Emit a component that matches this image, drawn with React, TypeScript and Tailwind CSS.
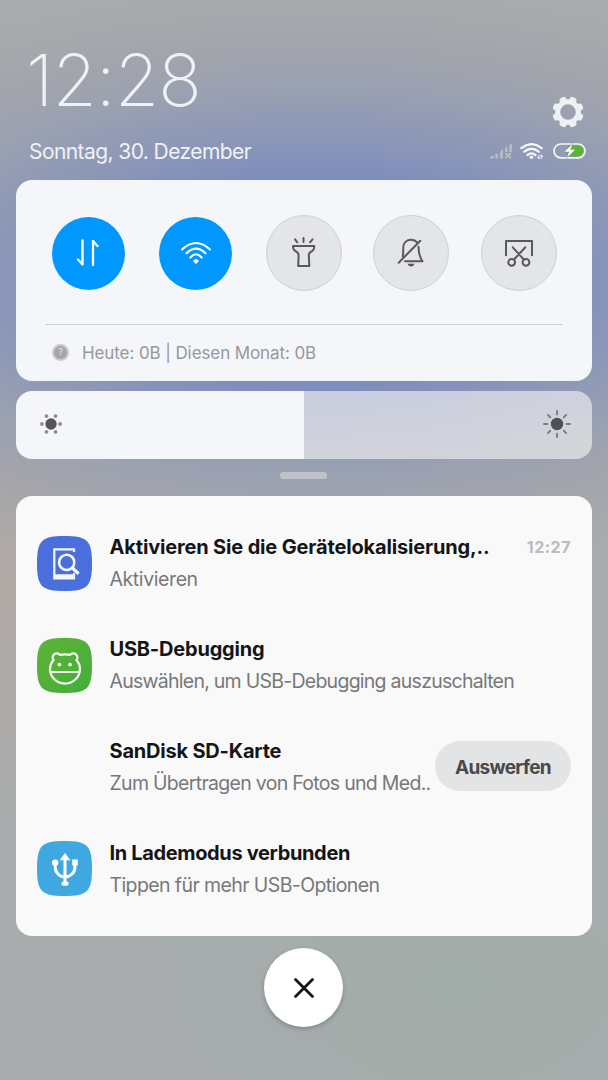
import type { ReactNode } from 'react'

interface NotificationRowProps {
  title: string
  text: string
  titleClass: string
  textClass: string
  icon?: ReactNode
  time?: string
  action?: string
}

function Glyph({ children }: { children: ReactNode }) {
  return (
    <svg
      className="h-8 w-8"
      viewBox="0 0 32 32"
      fill="none"
      stroke="currentColor"
      strokeWidth="2"
      strokeLinecap="round"
      strokeLinejoin="round"
    >
      {children}
    </svg>
  )
}

function Toggle({ active = false, children }: { active?: boolean; children: ReactNode }) {
  return (
    <button
      className={
        active
          ? 'mx-[1.5px] flex h-[73px] w-[73px] items-center justify-center rounded-full bg-[#0098ff] text-white'
          : 'flex h-[76px] w-[76px] items-center justify-center rounded-full border border-[#cfd0d8] bg-[#e4e5e7] text-[#58595d]'
      }
    >
      {children}
    </button>
  )
}

function AppIcon({ from, to, children }: { from: string; to: string; children: ReactNode }) {
  const id = `tile-${from.slice(1)}`
  return (
    <svg className="h-[55px] w-[55px]" viewBox="0 0 55 55" fill="none">
      <defs>
        <linearGradient id={id} x1="0" y1="0" x2="1" y2="1">
          <stop offset="0" stopColor={from} />
          <stop offset="1" stopColor={to} />
        </linearGradient>
      </defs>
      <path
        d="M27.5 0C50.5 0 55 4.5 55 27.5S50.5 55 27.5 55 0 50.5 0 27.5 4.5 0 27.5 0Z"
        fill={`url(#${id})`}
      />
      {children}
    </svg>
  )
}

function GearIcon() {
  const teeth = [22.5, 67.5, 112.5, 157.5, 202.5, 247.5, 292.5, 337.5]
  return (
    <svg className="h-8 w-8" viewBox="-16 -16 32 32" fill="#f0f1f4">
      <circle r="10.3" fill="none" stroke="#f0f1f4" strokeWidth="5" />
      {teeth.map((angle) => (
        <path
          key={angle}
          d="M-4 -11L-3 -14.9Q-2.8 -15.6 -2.1 -15.6H2.1Q2.8 -15.6 3 -14.9L4 -11Z"
          transform={`rotate(${angle})`}
        />
      ))}
    </svg>
  )
}

function StatusIcons() {
  return (
    <div className="flex items-center">
      <svg className="h-4 w-[22px]" viewBox="0 0 22 16" fill="#bcbdc4">
        <path d="M0 15.5V14L4 12.6V15.5ZM5.3 15.5V11.6L7.8 10.2V15.5ZM10.2 15.5V8.2L12.8 6.6V15.5ZM15 9V5L17.4 3.4V9ZM19.3 9V2L21.8 .4V9Z" />
        <path d="M15.5 10L21 15.2M21 10L15.5 15.2" stroke="#bcbdc4" strokeWidth="1.8" />
      </svg>
      <svg
        className="ml-2 h-4 w-6"
        viewBox="0 0 24 16"
        fill="none"
        stroke="#f5f6f8"
        strokeWidth="2.3"
        strokeLinecap="round"
      >
        <path d="M1.3 5.1Q11.5 -2.8 21.7 5.1M4.3 8.7Q11.5 2.8 18.7 8.7M7.5 12Q11.5 8.8 15.5 12" />
        <circle cx="11.5" cy="14.2" r="1.8" fill="#f5f6f8" stroke="none" />
        <path d="M19 12.2V15.6L17.9 14.5M21.3 15.8V12.4L22.4 13.5" strokeWidth="1.1" />
      </svg>
      <svg className="ml-[9px] h-4 w-[33px]" viewBox="0 0 33 16" fill="none">
        <path d="M15 2.6H25A5.3 5.3 0 0 1 25 13.2H13Z" fill="#58b82e" />
        <rect x="1" y="1" width="31" height="13.8" rx="6.9" stroke="#f5f6f8" strokeWidth="1.7" />
        <path
          d="M19.8 .4L11.2 9H16L13.4 15.4L22.4 6.6H17.6Z"
          fill="#fff"
          stroke="#8e9c9f"
          strokeWidth=".5"
        />
      </svg>
    </div>
  )
}

function NotificationRow({
  title,
  text,
  titleClass,
  textClass,
  icon,
  time,
  action,
}: NotificationRowProps) {
  return (
    <article className="flex h-[101.8px] items-start pr-[21px] pl-[21px]">
      <div className="mt-[2.6px] h-[55px] w-[55px] shrink-0">{icon}</div>
      <div className="ml-[17.5px] min-w-0 flex-1 whitespace-nowrap">
        <h2 className={`text-xl leading-7 font-bold text-[#151517] ${titleClass}`}>{title}</h2>
        <p className={`mt-[3.8px] text-[19.5px] leading-7 text-[#77787b] ${textClass}`}>{text}</p>
      </div>
      {time && (
        <span className="shrink-0 text-base leading-7 font-bold tracking-[0.5px] text-[#b9bac3]">
          {time}
        </span>
      )}
      {action && (
        <button className="mt-[4px] h-[50px] w-[136px] shrink-0 rounded-full bg-[#e3e4e6] pt-[4px] text-[19px] font-bold tracking-[-0.7px] text-[#48494b]">
          {action}
        </button>
      )}
    </article>
  )
}

export default function App() {
  return (
    <main className="flex h-[1080px] w-[608px] flex-col overflow-hidden bg-[#a8acad] bg-[radial-gradient(ellipse_560px_250px_at_52%_280px,#7f8dbc_0%,#7f8dbc_42%,#8c97b8_58%,#9aa1b1_78%,rgba(160,162,172,0.8)_92%,rgba(168,172,173,0)_118%),radial-gradient(ellipse_120px_260px_at_0_590px,#b0a9a5,rgba(168,172,173,0)),radial-gradient(ellipse_300px_200px_at_75%_980px,#a2ada9,rgba(168,172,173,0))] px-4 font-['Inter','Liberation_Sans',sans-serif]">
      <header className="flex h-[180px] shrink-0 justify-between pr-[6px] pl-[13px] text-[#f0f1f4]">
        <div className="pt-[44px] whitespace-nowrap">
          <div className="-ml-[3px] text-[72px] leading-[72px] font-[250] tracking-[-1px]">12:28</div>
          <div className="mt-[24px] text-[21px] leading-6 tracking-[-0.58px]">
            Sonntag, 30. Dezember
          </div>
        </div>
        <div className="flex flex-col items-end pt-[96px]">
          <div className="mr-[2px]">
            <GearIcon />
          </div>
          <div className="mt-[15px]">
            <StatusIcons />
          </div>
        </div>
      </header>

      <section className="h-[201px] shrink-0 rounded-2xl bg-[#f5f6fa] px-[29px]">
        <div className="flex h-[145px] items-center justify-between border-b border-[#d2d3d8] pt-[2px] pr-[6px] pl-[5px]">
          <Toggle active>
            <Glyph>
              <path d="M10.5 3.5V27.5L6 22.5M21 28V4L25.5 9" strokeWidth="2.3" />
            </Glyph>
          </Toggle>
          <Toggle active>
            <Glyph>
              <path d="M2 12.6Q16 -.5 30 12.6M6.5 16.3Q16 7 25.5 16.3M10.3 20.5Q16 14.2 21.7 20.5" />
              <path d="M13.3 24Q16 20.7 18.7 24L16 26.7Z" fill="currentColor" strokeWidth=".5" />
            </Glyph>
          </Toggle>
          <Toggle>
            <Glyph>
              <path d="M5 9H26.3Q26.5 12.5 24 14.2Q20.7 16 20.8 18L21.3 29H10.2L10.6 18Q10.7 16 7.5 14.2Q5 12.5 5 9Z" />
              <path d="M7 2.3L9.3 5.3M15.5 1V5M24.5 2.3L22 5.3" />
            </Glyph>
          </Toggle>
          <Toggle>
            <Glyph>
              <path d="M7.8 19.5Q8.3 17 8.3 10.5C8.5 5.5 12 2.8 16 2.8Q19.5 2.8 21.7 5M23.5 9.8Q23.7 19 27.5 24.3H10M3.7 25.7L25.3 3.7" />
              <path d="M12.3 26.8H19.7Q18.5 29.5 16 29.5T12.3 26.8Z" fill="currentColor" stroke="none" />
            </Glyph>
          </Toggle>
          <Toggle>
            <Glyph>
              <path d="M3 18.3V4H29V18.3M9.8 10.3L20.8 22.5M22.3 10.3L11 22.5" />
              <circle cx="8.7" cy="25.3" r="3.4" />
              <circle cx="23" cy="25.3" r="3.4" />
            </Glyph>
          </Toggle>
        </div>
        <div className="flex h-[56px] items-center pl-[7px]">
          <span className="-mt-[2px] flex h-[17px] w-[17px] items-center justify-center rounded-full border-2 border-[#c8c9cd] bg-[#a5a6aa] text-[9px] text-[#e8e8ec]">
            ?
          </span>
          <p className="ml-[13px] pt-[1px] text-[17px] tracking-[-0.1px] whitespace-nowrap text-[#97989c]">
            Heute: 0B | Diesen Monat: 0B
          </p>
        </div>
      </section>

      <section className="mt-[10px] flex h-[67.5px] shrink-0 items-center justify-between overflow-hidden rounded-2xl bg-[linear-gradient(90deg,#f5f6f9_50%,rgba(248,247,246,0.6)_50%)] pr-[20px] pb-[2px] pl-[23px]">
        <svg className="h-6 w-6" viewBox="-12 -12 24 24" fill="#8d8e91">
          <circle r="5.7" fill="#55565a" />
          {[0, 60, 120, 180, 240, 300].map((angle) => (
            <circle key={angle} cx="9.1" r="1.9" transform={`rotate(${angle})`} />
          ))}
        </svg>
        <svg
          className="h-[30px] w-[30px]"
          viewBox="-15 -15 30 30"
          stroke="#7b7c80"
          strokeWidth="1.9"
          strokeLinecap="round"
        >
          <circle r="6.2" fill="#4f5053" stroke="none" />
          {[0, 45, 90, 135, 180, 225, 270, 315].map((angle) => (
            <path key={angle} d="M9.6 0H13" transform={`rotate(${angle})`} />
          ))}
        </svg>
      </section>

      <div className="mt-[13px] mr-[1px] h-[7px] w-[47px] shrink-0 self-center rounded-full bg-[#bfc3c9]" />

      <section className="mt-[17.5px] h-[440px] shrink-0 overflow-hidden rounded-2xl bg-[#f9f9fa] pt-[37.4px]">
        <NotificationRow
          title="Aktivieren Sie die Gerätelokalisierung,.."
          text="Aktivieren"
          titleClass="tracking-[-0.16px]"
          textClass="tracking-[-0.4px]"
          time="12:27"
          icon={
            <AppIcon from="#4a6fdc" to="#4b70dd">
              <path d="M37 16V13.3H17.3V42.5H37V37" stroke="#f4f6fc" strokeWidth="2.2" />
              <path d="M17 38.3H37.5V43H17Z" fill="#f4f6fc" />
              <circle cx="29.7" cy="26.4" r="7.6" fill="#4a6fdc" stroke="#f4f6fc" strokeWidth="2.6" />
              <path d="M35.4 32L41.6 37.7" stroke="#f4f6fc" strokeWidth="3.2" />
            </AppIcon>
          }
        />
        <NotificationRow
          title="USB-Debugging"
          text="Auswählen, um USB-Debugging auszuschalten"
          titleClass="tracking-[-0.2px]"
          textClass="tracking-[-0.74px]"
          icon={
            <AppIcon from="#5fb336" to="#44ad3c">
              <path
                d="M16.5 22A3.8 3.8 0 1 1 22.8 16.9Q28 15.8 33.2 16.9A3.8 3.8 0 1 1 39.5 22Q43 26 43 31A15 14.6 0 0 1 13 31Q13 26 16.5 22ZM13.5 34H42.5"
                stroke="#f2faf0"
                strokeWidth="2.2"
              />
              <circle cx="22.4" cy="26.6" r="1.9" fill="#f2faf0" />
              <circle cx="33" cy="26.6" r="1.9" fill="#f2faf0" />
            </AppIcon>
          }
        />
        <NotificationRow
          title="SanDisk SD-Karte"
          text="Zum Übertragen von Fotos und Med.."
          titleClass="tracking-[-0.2px]"
          textClass="tracking-[-0.7px]"
          action="Auswerfen"
        />
        <NotificationRow
          title="In Lademodus verbunden"
          text="Tippen für mehr USB-Optionen"
          titleClass="tracking-[-0.35px]"
          textClass="tracking-[-0.6px]"
          icon={
            <AppIcon from="#40a8e1" to="#41a9e2">
              <path
                d="M28 18V42M18.2 22V26C18.2 32 23 36 28 36S38 32 38 26V22"
                stroke="#fff"
                strokeWidth="3"
              />
              <path d="M28 12L33.3 19.2H22.7Z" fill="#fff" />
              <circle cx="18.2" cy="21.6" r="3.2" fill="#fff" />
              <path d="M35.2 18.5H40.8V24.5H35.2Z" fill="#fff" />
              <rect x="24.4" y="40.4" width="7.2" height="4.4" rx="2" fill="#fff" />
            </AppIcon>
          }
        />
      </section>

      <button className="mt-[12px] mr-[1px] flex h-[79px] w-[79px] shrink-0 items-center justify-center self-center rounded-full bg-white text-[#151515] shadow-[0_2px_4px_rgba(90,95,120,0.5)]">
        <svg
          className="ml-[1px] h-6 w-6"
          viewBox="0 0 24 24"
          stroke="currentColor"
          strokeWidth="2.8"
          strokeLinecap="round"
        >
          <path d="M3.5 3.5L20.5 20.5M20.5 3.5L3.5 20.5" />
        </svg>
      </button>
    </main>
  )
}
